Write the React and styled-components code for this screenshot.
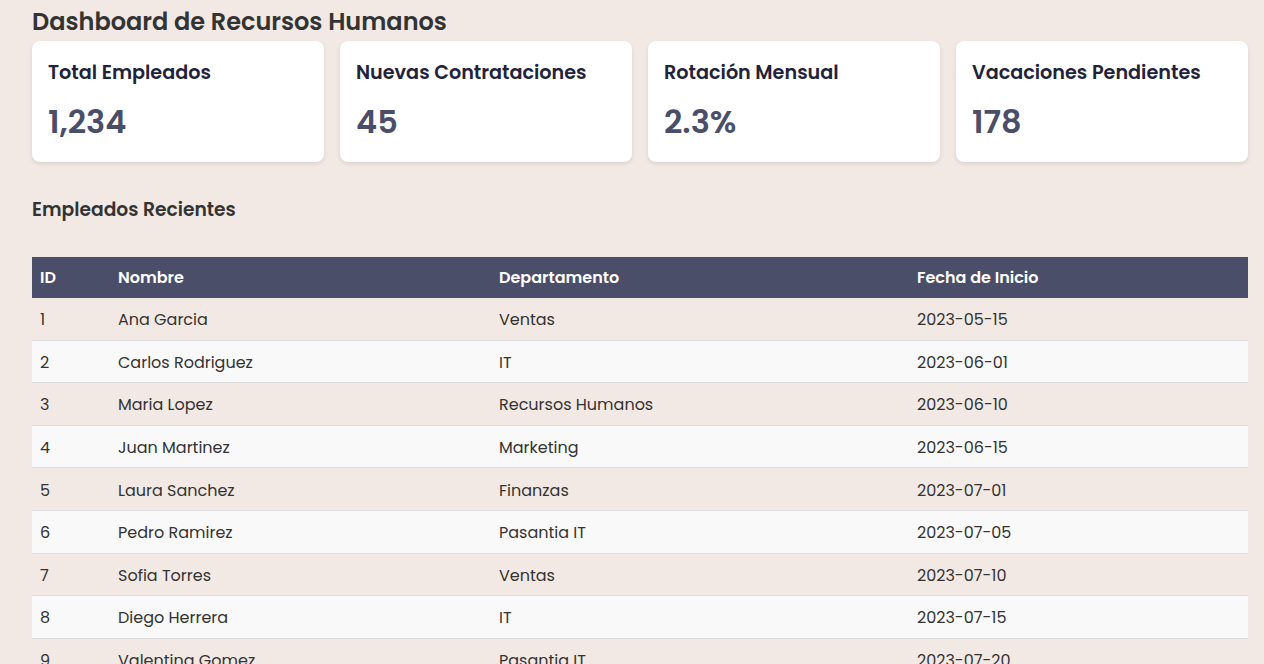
import React from "react";
import styled, { createGlobalStyle } from "styled-components";

const Global = createGlobalStyle`
  html, body { margin: 0; padding: 0; background: #f2e9e4; }
  body { font-family: Poppins, Inter, "Noto Sans", sans-serif; color: #333; overflow: hidden; }
  * { box-sizing: border-box; }
`;

const Page = styled.div`
  padding: 7px 16px 0 32px;
`;

const Title = styled.h1`
  margin: 0 0 4px;
  font-size: 24px;
  line-height: 30px;
  font-weight: 600;
  color: #333;
`;

const Cards = styled.div`
  display: grid;
  grid-template-columns: repeat(4, 1fr);
  gap: 16px;
`;

const Card = styled.div`
  background: #fff;
  border-radius: 8px;
  padding: 18px 16px 16px;
  box-shadow: 0 2px 4px rgba(0, 0, 0, 0.1);
`;

const CardTitle = styled.h3`
  margin: 0 0 12px;
  font-size: 19.2px;
  line-height: 27px;
  font-weight: 600;
  color: #22223b;
`;

const CardValue = styled.div`
  font-size: 32px;
  line-height: 48px;
  font-weight: 600;
  color: #4a4e69;
`;

const SectionTitle = styled.h2`
  margin: 34px 0 34px;
  font-size: 18.72px;
  line-height: 27px;
  font-weight: 600;
  color: #333;
`;

const Table = styled.table`
  width: 100%;
  border-collapse: collapse;
  table-layout: fixed;
`;

const Th = styled.th`
  background: #4a4e69;
  color: #fff;
  text-align: left;
  font-size: 16px;
  line-height: 25px;
  font-weight: 600;
  padding: 8px;
  width: ${(p) => p.$w}px;
`;

const Row = styled.tr`
  background: ${(p) => (p.$alt ? "#f9f9f9" : "transparent")};
`;

const Td = styled.td`
  font-size: 16px;
  line-height: 24px;
  padding: 10.3px 8px 7.3px;
  color: #333;
  border-bottom: 1px solid #ddd;
`;

const cards = [
  ["Total Empleados", "1,234"],
  ["Nuevas Contrataciones", "45"],
  ["Rotación Mensual", "2.3%"],
  ["Vacaciones Pendientes", "178"],
];

const rows = [
  [1, "Ana Garcia", "Ventas", "2023-05-15"],
  [2, "Carlos Rodriguez", "IT", "2023-06-01"],
  [3, "Maria Lopez", "Recursos Humanos", "2023-06-10"],
  [4, "Juan Martinez", "Marketing", "2023-06-15"],
  [5, "Laura Sanchez", "Finanzas", "2023-07-01"],
  [6, "Pedro Ramirez", "Pasantia IT", "2023-07-05"],
  [7, "Sofia Torres", "Ventas", "2023-07-10"],
  [8, "Diego Herrera", "IT", "2023-07-15"],
  [9, "Valentina Gomez", "Pasantia IT", "2023-07-20"],
  [10, "Andres Castro", "Finanzas", "2023-07-25"],
];

export default function App() {
  return (
    <Page>
      <Global />
      <Title>Dashboard de Recursos Humanos</Title>
      <Cards>
        {cards.map(([t, v]) => (
          <Card key={t}>
            <CardTitle>{t}</CardTitle>
            <CardValue>{v}</CardValue>
          </Card>
        ))}
      </Cards>
      <SectionTitle>Empleados Recientes</SectionTitle>
      <Table>
        <thead>
          <tr>
            <Th $w={78}>ID</Th>
            <Th $w={381}>Nombre</Th>
            <Th $w={418}>Departamento</Th>
            <Th $w={339}>Fecha de Inicio</Th>
          </tr>
        </thead>
        <tbody>
          {rows.map((r, i) => (
            <Row key={r[0]} $alt={i % 2 === 1}>
              {r.map((c, j) => (
                <Td key={j}>{c}</Td>
              ))}
            </Row>
          ))}
        </tbody>
      </Table>
    </Page>
  );
}
